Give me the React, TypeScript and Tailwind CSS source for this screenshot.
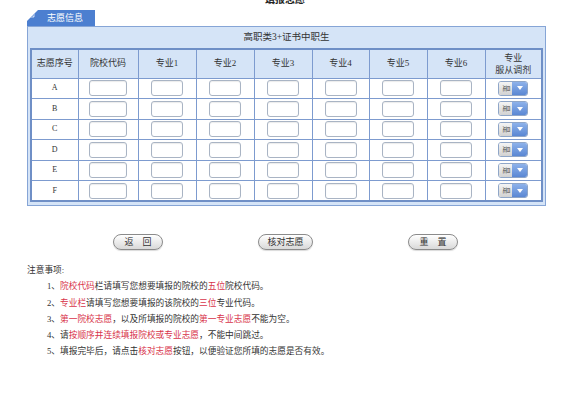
import React from "react";

const font = { fontFamily: '"Liberation Serif", "Noto Sans CJK SC", serif' };

const cols = [
  { label: "志愿序号", w: 47 },
  { label: "院校代码", w: 60, input: 38 },
  { label: "专业1", w: 58, input: 32 },
  { label: "专业2", w: 58, input: 32 },
  { label: "专业3", w: 58, input: 32 },
  { label: "专业4", w: 57, input: 32 },
  { label: "专业5", w: 58, input: 32 },
  { label: "专业6", w: 58, input: 32 },
];

const rows = ["A", "B", "C", "D", "E", "F"];

function TextBox({ w }: { w: number }) {
  return (
    <div
      className="mx-auto h-[16px] rounded-[3px] border border-[#a9b4c4] bg-white shadow-[inset_0_1px_1px_rgba(0,0,0,0.08)]"
      style={{ width: w }}
    />
  );
}

function YesSelect() {
  return (
    <div className="mx-auto flex h-[15px] w-[30px] overflow-hidden rounded-[3px] border border-[#8fa6c8]">
      <div className="flex w-[13px] items-center justify-center bg-gradient-to-b from-[#f4f4f4] to-[#d2d2d2] text-[7px] leading-none text-[#444]">
        <span className="rotate-90">是</span>
      </div>
      <div className="flex flex-1 items-center justify-center bg-gradient-to-b from-[#8eb2ea] to-[#5a87d3]">
        <svg width="6" height="4" viewBox="0 0 6 4">
          <path d="M0 0h6L3 4z" fill="#fff" />
        </svg>
      </div>
    </div>
  );
}

function PillButton({ children, w = 50 }: { children: React.ReactNode; w?: number }) {
  return (
    <button
      type="button"
      className="flex h-[16px] items-center justify-center rounded-full border border-[#8b8b8b] bg-gradient-to-b from-[#ffffff] to-[#d9d9d9] text-[9px] leading-none text-[#333] shadow-[0_1px_1px_rgba(0,0,0,0.15)]"
      style={{ width: w }}
    >
      {children}
    </button>
  );
}

const red = "text-[#d8344a]";

export default function App() {
  return (
    <div className="h-[400px] w-[570px] overflow-hidden bg-white text-[#333]" style={font}>
      <div className="-mt-[6px] text-center text-[10px] font-bold leading-[12px] text-[#222]">填报志愿</div>

      <div className="ml-[27px] mt-[4px] w-[519px]">
        <div className="flex h-[16px]">
          <div className="relative flex w-[68px] items-center justify-center bg-[#4c7fd0] pl-[8px] text-[9px] leading-none text-white [clip-path:polygon(11px_0,100%_0,100%_100%,0_100%,0_11px)]">
            <svg className="absolute left-[1px] top-[1px]" width="7" height="7" viewBox="0 0 7 7">
              <path d="M1 1l5 5M6 2v4H2" stroke="#c9daf5" strokeWidth="1" fill="none" />
            </svg>
            志愿信息
          </div>
        </div>
        <div className="border border-[#86a5d6] bg-[#d5e4f7] px-[2px] pb-[3px]">
          <div className="flex h-[21px] items-center justify-center text-[9.5px] text-[#333]">高职类3+证书中职生</div>
          <table className="w-full table-fixed border-collapse border-2 border-[#6f8fc6] text-[9px]">
            <colgroup>
              {cols.map((c) => (
                <col key={c.label} style={{ width: c.w }} />
              ))}
              <col />
            </colgroup>
            <thead>
              <tr className="h-[29px] bg-[#d5e4f7]">
                {cols.map((c) => (
                  <th key={c.label} className="border border-[#7d9bcf] font-normal text-[#333]">
                    {c.label}
                  </th>
                ))}
                <th className="border border-[#7d9bcf] font-normal leading-[12px] text-[#333]">
                  专业
                  <br />
                  服从调剂
                </th>
              </tr>
            </thead>
            <tbody>
              {rows.map((r) => (
                <tr key={r} className="h-[20.5px] bg-white">
                  <td className="border border-[#7d9bcf] text-center text-[8px]">{r}</td>
                  {cols.slice(1).map((c) => (
                    <td key={c.label} className="border border-[#7d9bcf]">
                      <TextBox w={c.input ?? 32} />
                    </td>
                  ))}
                  <td className="border border-[#7d9bcf]">
                    <YesSelect />
                  </td>
                </tr>
              ))}
            </tbody>
          </table>
        </div>
      </div>

      <div className="mt-[28px] flex pl-[113px]">
        <PillButton>返　回</PillButton>
        <div className="ml-[95px]">
          <PillButton w={55}>核对志愿</PillButton>
        </div>
        <div className="ml-[95px]">
          <PillButton>重　置</PillButton>
        </div>
      </div>

      <div className="mt-[12px] pl-[27px] text-[8.7px] leading-[16.3px] text-[#333]">
        <div>注意事项:</div>
        <div className="pl-[20px]">
          <div>
            1、<span className={red}>院校代码</span>栏请填写您想要填报的院校的<span className={red}>五位</span>院校代码。
          </div>
          <div>
            2、<span className={red}>专业栏</span>请填写您想要填报的该院校的<span className={red}>三位</span>专业代码。
          </div>
          <div>
            3、<span className={red}>第一院校志愿</span>，以及所填报的院校的<span className={red}>第一专业志愿</span>不能为空。
          </div>
          <div>
            4、请<span className={red}>按顺序并连续填报院校或专业志愿</span>，不能中间跳过。
          </div>
          <div>
            5、填报完毕后，请点击<span className={red}>核对志愿</span>按钮，以便验证您所填的志愿是否有效。
          </div>
        </div>
      </div>
    </div>
  );
}
